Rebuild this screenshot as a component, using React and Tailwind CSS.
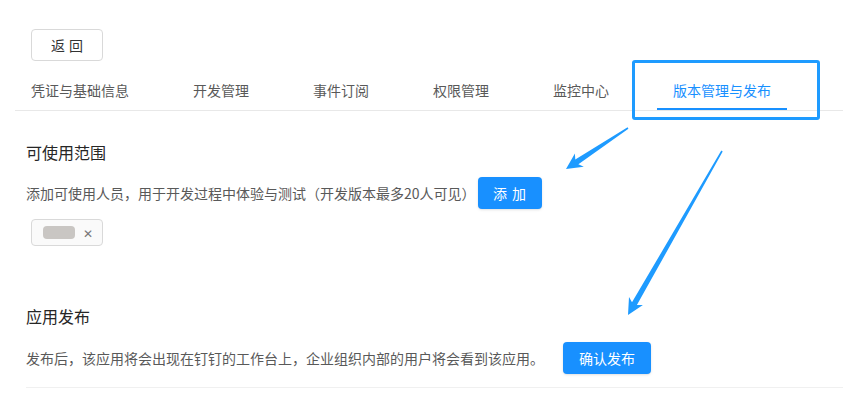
import React from 'react';

const tabs = ['凭证与基础信息', '开发管理', '事件订阅', '权限管理', '监控中心', '版本管理与发布'];

// callout arrow, tail -> tip, in page pixels
function arrowPoints(x1, y1, x2, y2) {
  const dx = x2 - x1;
  const dy = y2 - y1;
  const L = Math.hypot(dx, dy);
  const ux = dx / L;
  const uy = dy / L;
  const local = [
    [0, -0.8],
    [L - 13, -2.8],
    [L - 16, -8],
    [L, 0],
    [L - 16, 8],
    [L - 13, 2.8],
    [0, 0.8],
  ];
  return local
    .map(([a, b]) => `${(x1 + a * ux - b * uy).toFixed(1)},${(y1 + a * uy + b * ux).toFixed(1)}`)
    .join(' ');
}

export default function App() {
  return (
    <div
      className="relative min-h-[413px] w-full bg-white pl-[15px] pt-[29px] text-sm"
      style={{ fontFamily: '"Noto Sans CJK SC", "Noto Sans", sans-serif' }}
    >
      <button className="ml-4 flex h-8 w-[72px] items-center justify-center gap-1 rounded border border-[#d9d9d9] bg-white text-sm text-[#333]">
        <span>返</span>
        <span>回</span>
      </button>

      <nav className="mt-[6px] flex gap-8 border-b border-[#e8e8e8]">
        {tabs.map((t, i) => (
          <div
            key={t}
            className={`relative px-4 pt-3 pb-[9px] leading-[22px] ${i === 5 ? 'text-[#1890ff]' : 'text-[#595959]'}`}
          >
            {t}
            {i === 5 && <span className="absolute bottom-0 left-0 h-[2px] w-full bg-[#1890ff]" />}
          </div>
        ))}
      </nav>

      <section className="ml-[11px] mt-[29px]">
        <h3 className="text-base leading-6 text-[#262626]">可使用范围</h3>
        <div className="mt-[13px] flex items-center">
          <span className="text-[#595959]">添加可使用人员，用于开发过程中体验与测试（开发版本最多20人可见）</span>
          <button className="ml-[2px] flex h-8 w-16 items-center justify-center gap-[5px] rounded bg-[#1890ff] text-white shadow-sm">
            <span>添</span>
            <span>加</span>
          </button>
        </div>
        <div className="mt-[10px] ml-[5px] flex h-[27px] w-[72px] items-center rounded border border-[#d9d9d9] bg-[#fafafa] pl-[11px]">
          <span className="h-[13px] w-8 rounded-sm bg-[#c9c6c3] blur-[0.6px]" />
          <span className="ml-[8px] text-xs text-[#777]">✕</span>
        </div>
      </section>

      <section className="ml-[11px] mt-[58px] border-b border-[#f0f0f0] pb-[13px]">
        <h3 className="text-base leading-6 text-[#262626]">应用发布</h3>
        <div className="mt-[14px] flex items-center">
          <span className="text-[#595959]">发布后，该应用将会出现在钉钉的工作台上，企业组织内部的用户将会看到该应用。</span>
          <button className="ml-[19px] h-8 rounded bg-[#1890ff] px-4 text-white shadow-sm">确认发布</button>
        </div>
      </section>

      {/* annotation overlay */}
      <div className="pointer-events-none absolute left-[632px] top-[60px] h-[60px] w-[188px] rounded-[3px] border-[3px] border-[#1e9bff]" />
      <svg className="pointer-events-none absolute left-0 top-0" width="843" height="413">
        <polygon points={arrowPoints(628, 128, 566, 169)} fill="#1e9bff" />
        <polygon points={arrowPoints(722, 151, 628, 315)} fill="#1e9bff" />
      </svg>
    </div>
  );
}
